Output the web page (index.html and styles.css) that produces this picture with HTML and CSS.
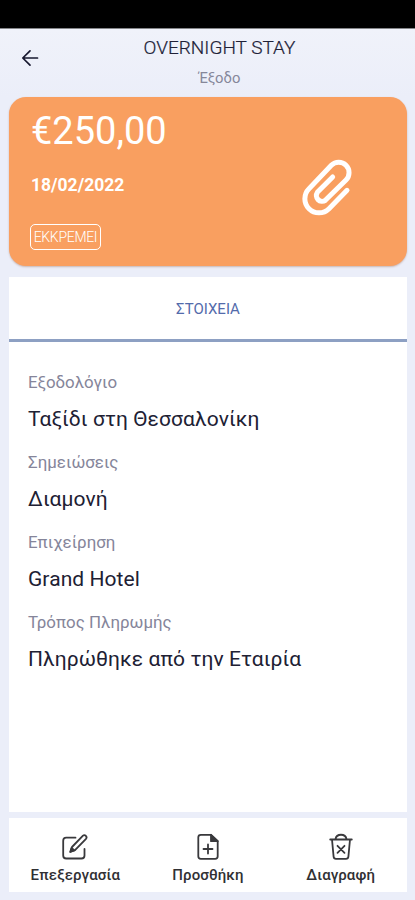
FILE: index.html
```html
<!DOCTYPE html>
<html lang="el">
<head>
<meta charset="utf-8">
<title>Έξοδο</title>
<link rel="stylesheet" href="styles.css">
</head>
<body>
<div class="screen">
  <div class="statusbar"></div>
  <header class="header">
    <svg class="back" viewBox="0 0 18 18"><path d="M16.5 9H2M9 1.8L1.8 9L9 16.2"/></svg>
    <div class="titles">
      <h1 class="title">OVERNIGHT STAY</h1>
      <p class="subtitle">Έξοδο</p>
    </div>
  </header>
  <section class="summary">
    <div class="facts">
      <div class="amount">€250,00</div>
      <div class="date">18/02/2022</div>
      <div class="badge">ΕΚΚΡΕΜΕΙ</div>
    </div>
    <svg class="clip" viewBox="290 206 150 171"><path d="M425 300L371 355A42 42 0 0 1 311 295L378 225A31 31 0 0 1 422 269L360 330A17.3 17.3 0 0 1 336 306L382 260"/></svg>
  </section>
  <main class="panel">
    <div class="tab"><span>ΣΤΟΙΧΕΙΑ</span></div>
    <dl class="fields">
      <dt>Εξοδολόγιο</dt><dd>Ταξίδι στη Θεσσαλονίκη</dd>
      <dt>Σημειώσεις</dt><dd>Διαμονή</dd>
      <dt>Επιχείρηση</dt><dd>Grand Hotel</dd>
      <dt>Τρόπος Πληρωμής</dt><dd>Πληρώθηκε από την Εταιρία</dd>
    </dl>
  </main>
  <nav class="actions">
    <div class="action">
      <svg viewBox="0 0 28 28"><path d="M14.5 4.7H5.2Q2.2 4.7 2.2 7.7V22.5Q2.2 25.5 5.2 25.5H20.5Q23.5 25.5 23.5 22.5V16"/><path d="M9.5 18.7L11 14L22 2.7Q23.3 1.5 24.8 2.8Q26.3 4.2 25 5.8L14 17.1Z"/><path class="solid" d="M9.2 19L10.6 14.8L13.3 17.5Z"/></svg>
      <span>Επεξεργασία</span>
    </div>
    <div class="action">
      <svg viewBox="0 0 28 28"><path d="M17 1.8H6.8Q4.3 1.8 4.3 4.3V23.3Q4.3 25.8 6.8 25.8H21.2Q23.7 25.8 23.7 23.3V8.2Z"/><path class="solid" d="M17 1.8V8.2H23.7Z"/><path d="M14 11.5V20.5M9.5 16H18.5"/></svg>
      <span>Προσθήκη</span>
    </div>
    <div class="action">
      <svg viewBox="0 0 28 28"><path d="M3.2 6.5H24.8M5 6.5L6.6 23.6Q6.8 25.8 9 25.8H19Q21.2 25.8 21.4 23.6L23 6.5M8.5 6C9.5 0.3 18.5 0.3 19.5 6M10.5 12.8L17.5 19.8M17.5 12.8L10.5 19.8"/></svg>
      <span>Διαγραφή</span>
    </div>
  </nav>
</div>
</body>
</html>
```
FILE: styles.css
```css
* { box-sizing: border-box; }
body { margin: 0; background: #ebeef9; font-family: Roboto, "Noto Sans", sans-serif; }
h1, p, dl, dd { margin: 0; font-weight: 400; }
svg { fill: none; stroke-linecap: round; stroke-linejoin: round; display: block; }
.screen { height: 900px; display: flex; flex-direction: column; overflow: hidden; padding-bottom: 8px; white-space: nowrap; }
.statusbar { height: 29px; flex: none; background: #000; border-bottom: 1px solid #85868a; }
.header { height: 68px; flex: none; display: grid; grid-template-columns: 48px 1fr 24px; background: linear-gradient(#f0f2fa, #ebeef9); }
.back { width: 18px; height: 18px; margin: 20px 0 0 21px; stroke: #17182f; stroke-width: 1.7; }
.titles { text-align: center; padding-top: 7px; }
.title { font-size: 19px; line-height: 24px; color: #202137; font-weight: 300; -webkit-text-stroke: .2px #202137; }
.subtitle { font-size: 14.8px; line-height: 20px; margin-top: 8px; color: #85879a; }
.summary { flex: none; height: 169px; margin: 0 8px 0 9px; border-radius: 17px; background: #f99f60; color: #fff; display: flex; justify-content: space-between; box-shadow: 0 1px 2px #c8b6b4; }
.facts { padding: 11px 0 0 22px; }
.amount { font-size: 38px; line-height: 46px; }
.date { font-size: 17.5px; line-height: 22px; margin-top: 20px; font-weight: 700; }
.badge { width: 71px; height: 26px; margin: 28px 0 0 -1px; border: 1px solid #fff; border-radius: 5px; font-size: 14px; line-height: 25px; letter-spacing: -.3px; text-align: center; font-weight: 300; }
.clip { width: 50px; height: 57px; margin: 62px 55px 0 0; stroke: #fff; stroke-width: 15; }
.panel { flex: 1; margin: 11px 8px 0 9px; background: #fff; }
.tab { height: 65px; border-bottom: 3px solid #8da0c3; color: #536bab; display: flex; align-items: center; justify-content: center; font-size: 15px; padding-top: 2px; }
.fields { padding: 28px 0 0 19px; }
.fields dt { font-size: 16.9px; line-height: 24px; color: #85859a; }
.fields dd { font-size: 21px; line-height: 28px; margin: 11px 0 17px; color: #202033; letter-spacing: .07px; }
.actions { flex: none; height: 74px; margin: 6px 8px 0 9px; background: #fff; display: grid; grid-template-columns: repeat(3, 1fr); }
.action { display: flex; flex-direction: column; align-items: center; padding-top: 15px; color: #303033; font-size: 15px; line-height: 20px; font-weight: 500; }
.action svg { width: 28px; height: 28px; stroke: #39393c; stroke-width: 1.8; }
.action span { margin-top: 4px; letter-spacing: .1px; }
.action .solid { fill: #39393c; }
```
